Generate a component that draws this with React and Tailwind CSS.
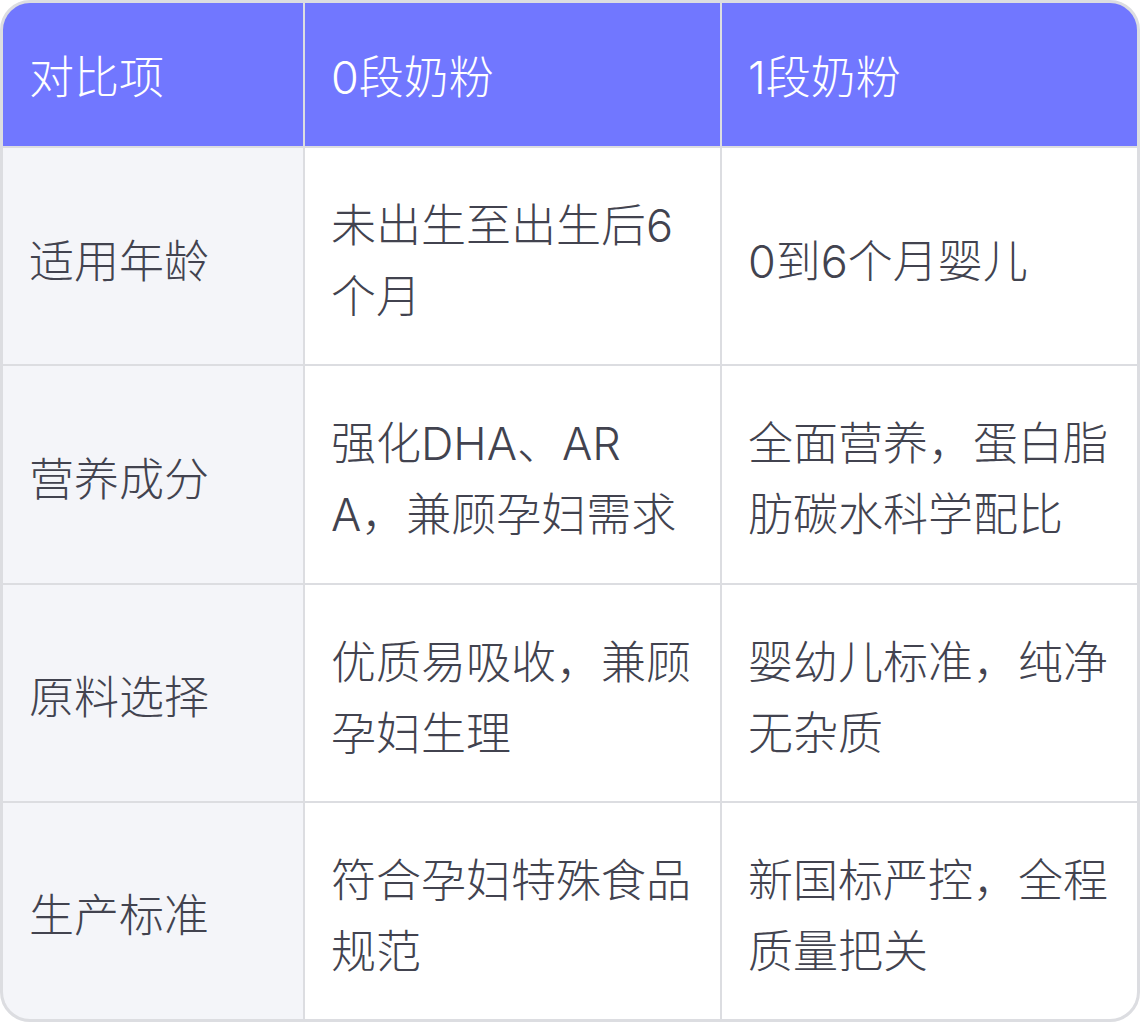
const headers = ['对比项', '0段奶粉', '1段奶粉'];

const rows = [
  ['适用年龄', '未出生至出生后6个月', '0到6个月婴儿'],
  ['营养成分', '强化DHA、ARA，兼顾孕妇需求', '全面营养，蛋白脂肪碳水科学配比'],
  ['原料选择', '优质易吸收，兼顾孕妇生理', '婴幼儿标准，纯净无杂质'],
  ['生产标准', '符合孕妇特殊食品规范', '新国标严控，全程质量把关'],
];

export default function App() {
  return (
    <div
      className="h-[1022px] w-[1140px] bg-white"
      style={{ fontFamily: 'Inter, "Noto Sans CJK SC", sans-serif' }}
    >
      <div className="grid h-full grid-cols-[300px_415px_415px] grid-rows-[143px_repeat(4,1fr)] gap-[2px] overflow-hidden rounded-[30px] border-[3px] border-[#dcdde1] bg-[#dcdde1]">
        {headers.map((h) => (
          <div key={h} className="flex items-center bg-[#7177ff] px-[26px] pt-[6px] text-[45px] font-light text-white">
            {h}
          </div>
        ))}
        {rows.map((row) =>
          row.map((cell, i) => (
            <div
              key={row[0] + i}
              className={`flex items-center px-[26px] pt-[10px] text-[45px] font-light leading-[71px] text-[#42434f] break-all ${i === 0 ? 'bg-[#f4f5f9]' : 'bg-white'}`}
            >
              <span>{cell}</span>
            </div>
          ))
        )}
      </div>
    </div>
  );
}
